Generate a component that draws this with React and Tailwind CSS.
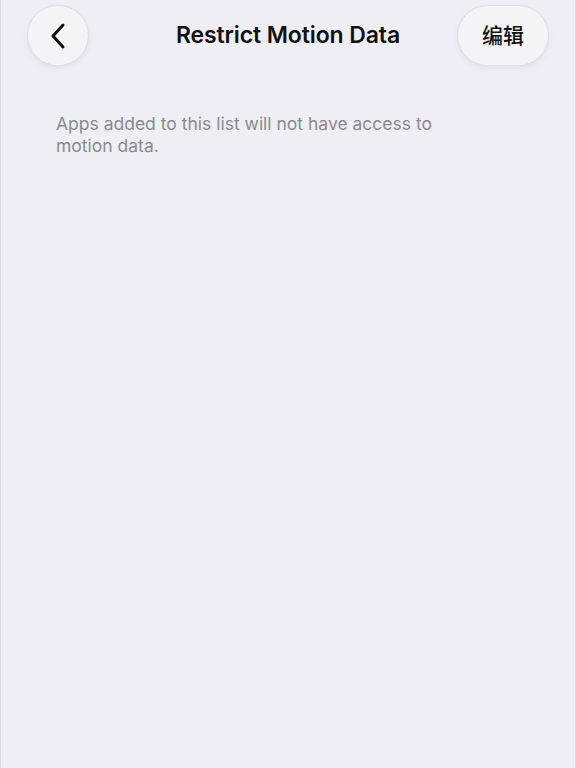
export default function App() {
  return (
    <div
      className="h-[768px] w-[576px] bg-[#efeef4] border-x border-[#dcdce0] overflow-hidden"
      style={{ fontFamily: 'Inter, "Noto Sans CJK SC", sans-serif' }}
    >
      {/* nav bar */}
      <div className="grid grid-cols-[1fr_auto_1fr] items-center pl-[26px] pr-[26px] pt-[5px]">
        <div className="flex justify-start">
          <button className="w-[62px] h-[61px] rounded-full bg-[#f4f4f7] border border-[#dedee2] shadow-[0_2px_6px_rgba(0,0,0,0.06)] flex items-center justify-center">
            <svg width="20" height="30" viewBox="0 0 20 30" fill="none">
              <path d="M15 4 L5 15 L15 26" stroke="#111" strokeWidth="3" strokeLinecap="round" strokeLinejoin="round" />
            </svg>
          </button>
        </div>
        <h1 className="text-[23px] font-semibold text-[#111] tracking-[-0.1px]">Restrict Motion Data</h1>
        <div className="flex justify-end">
          <button className="w-[92px] h-[61px] rounded-full bg-[#f4f4f7] border border-[#dedee2] shadow-[0_2px_6px_rgba(0,0,0,0.06)] flex items-center justify-center text-[21px] font-medium text-[#111]">
            编辑
          </button>
        </div>
      </div>

      <p className="mt-[47px] pl-[55px] w-[448px] text-[17.5px] leading-[22px] text-[#8a8a8e]">
        Apps added to this list will not have access to motion data.
      </p>
    </div>
  );
}
